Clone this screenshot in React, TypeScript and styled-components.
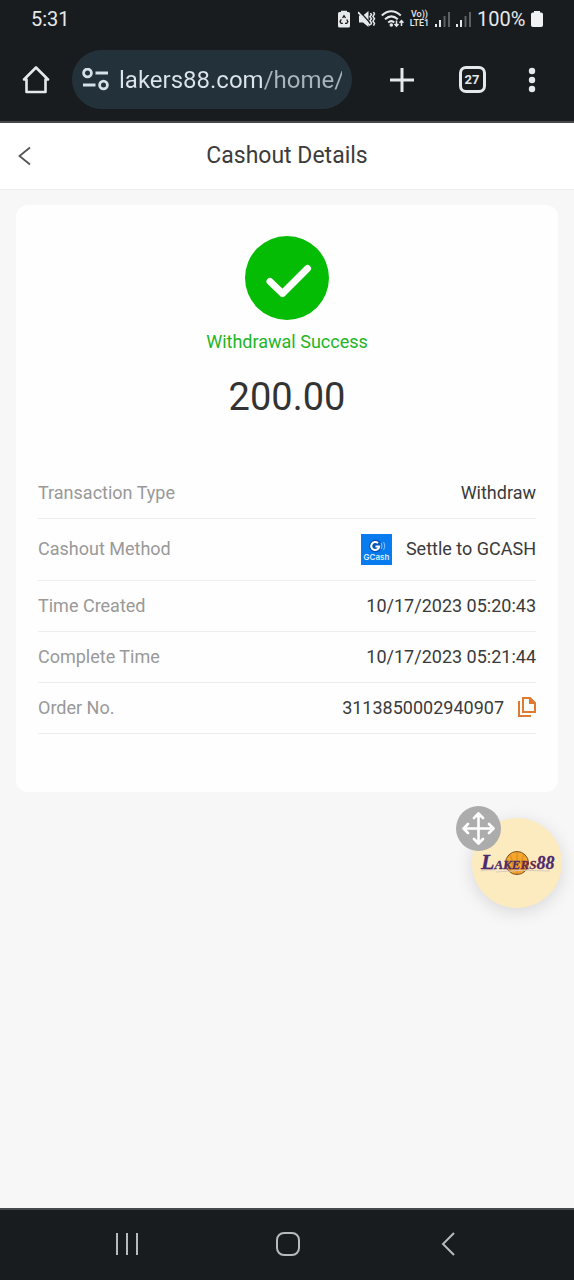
import React from "react";
import styled, { createGlobalStyle } from "styled-components";

const GlobalStyle = createGlobalStyle`
  *, *::before, *::after { box-sizing: border-box; }
  body { margin: 0; background: #f7f7f7; font-family: Roboto, "Liberation Sans", sans-serif; }
  h1, p, dl, dd { margin: 0; font-weight: 400; }
  button { border: 0; padding: 0; background: none; color: inherit; font: inherit; cursor: pointer; }
  svg { display: block; flex: none; }
`;

const Screen = styled.div`
  display: flex;
  flex-direction: column;
  min-height: 100vh;
`;

const BrowserChrome = styled.header`
  background: #191c1f;
  color: #e6e8ea;
  border-bottom: 2px solid #48494b;
`;

const StatusBar = styled.div`
  display: flex;
  align-items: center;
  justify-content: space-between;
  height: 38px;
  padding: 0 31px;
  font-size: 20px;
`;

const StatusIcons = styled.div`
  display: flex;
  align-items: center;
  gap: 5px;
`;

const NetworkLabel = styled.span`
  display: flex;
  flex-direction: column;
  align-items: center;
  width: 21px;
  font-size: 9px;
  font-weight: 500;
  line-height: 9px;
`;

const Charge = styled.span`
  width: 49px;
  white-space: nowrap;
`;

const Toolbar = styled.div`
  display: flex;
  align-items: center;
  gap: 28px;
  height: 83px;
  padding: 0 30px 0 16px;
`;

const IconButton = styled.button<{ $width?: number }>`
  display: flex;
  flex: none;
  align-items: center;
  justify-content: center;
  width: ${(p) => p.$width ?? 40}px;
  height: 44px;
`;

const AddressGroup = styled.div`
  display: flex;
  flex: 1;
  align-items: center;
  gap: 16px;
  min-width: 0;
`;

const AddressBar = styled.label`
  display: flex;
  flex: 1;
  align-items: center;
  gap: 9px;
  min-width: 0;
  height: 59px;
  padding: 0 10px;
  border-radius: 30px;
  background: #23313a;
`;

const AddressInput = styled.input`
  flex: 1;
  min-width: 0;
  height: 36px;
  padding: 0;
  border: 0;
  outline: 0;
  background: linear-gradient(90deg, #dce5eb 144px, #a9b5bd 144px);
  background-clip: text;
  color: transparent;
  font: 400 24px Roboto, sans-serif;
`;

const TabCount = styled.span`
  display: flex;
  align-items: center;
  justify-content: center;
  width: 27px;
  height: 27px;
  border: 3px solid #e6e8ea;
  border-radius: 7px;
  font-size: 13px;
  font-weight: 700;
`;

const PageHeader = styled.div`
  display: grid;
  grid-template-columns: 48px 1fr 48px;
  align-items: center;
  height: 67px;
  background: #fff;
  border-bottom: 1px solid #eeeeee;
  color: #3c3c3c;
`;

const Title = styled.h1`
  font-size: 23px;
  line-height: 28px;
  text-align: center;
`;

const Main = styled.main`
  position: relative;
  flex: 1;
  padding: 15px 16px;
`;

const Card = styled.section`
  display: flex;
  flex-direction: column;
  align-items: center;
  padding: 31px 22px 58px;
  border-radius: 12px;
  background: #fefefe;
`;

const Status = styled.p`
  margin-top: 10px;
  color: #1fb526;
  font-size: 18px;
  line-height: 24px;
`;

const Amount = styled.p`
  margin-top: 19px;
  color: #333;
  font-size: 38px;
  line-height: 48px;
`;

const Details = styled.dl`
  width: 100%;
  margin-top: 47px;
  font-size: 18px;
`;

const Row = styled.div`
  display: flex;
  align-items: center;
  justify-content: space-between;
  min-height: 51px;
  padding-bottom: 2px;
  border-bottom: 1px solid #eeeeee;
`;

const Label = styled.dt`
  color: #999;
`;

const Value = styled.dd`
  display: flex;
  align-items: center;
  gap: 14px;
  color: #3a3a3a;
`;

const MethodLogo = styled.span`
  display: block;
  padding: 15px 0 13px;
`;

const CopyButton = styled.button`
  display: block;
`;

const FloatingBadge = styled.div`
  position: absolute;
  right: 12px;
  bottom: 300px;
  width: 90px;
  height: 90px;
`;

const BrandButton = styled.button`
  width: 90px;
  height: 90px;
  border-radius: 50%;
  background: #fdebc0;
  box-shadow: 0 4px 18px rgba(0, 0, 0, 0.13);
`;

const DragHandle = styled.button`
  position: absolute;
  top: -12px;
  left: -16px;
  display: flex;
  align-items: center;
  justify-content: center;
  width: 45px;
  height: 45px;
  border-radius: 50%;
  background: #acacac;
`;

const NavBar = styled.nav`
  display: flex;
  align-items: center;
  justify-content: space-between;
  height: 72px;
  padding: 0 104px 2px 105px;
  border-top: 2px solid #48494b;
  background: #191c1f;
`;

const SignalIcon = () => (
  <svg width="16" height="18" viewBox="0 0 16 18" aria-hidden="true">
    <path d="M0 14h2v3H0z M4 10h2v7H4z" fill="#e6e8ea" />
    <path d="M8.500 6h2v11h-2z M13 2h2v15h-2z" fill="#5d6164" />
  </svg>
);

const SaverIcon = () => (
  <svg width="16" height="18" viewBox="0 0 16 18" aria-hidden="true">
    <path d="M4 2V.8h6V2h1.500Q13 2 13 3.500V16q0 1.500-1.500 1.500h-9Q1 17.500 1 16V3.500Q1 2 2.500 2z" fill="#e6e8ea" />
    <path d="M5.600 8 7 5.800 8.500 8M9.700 9.500l1.200 2.200-1.200 1.600H8M5.800 13.300H4.200L3 11.700l1.300-2.300" fill="none" stroke="#191c1f" strokeWidth="1.300" />
  </svg>
);

const MuteIcon = () => (
  <svg width="18" height="18" viewBox="0 0 18 18" aria-hidden="true">
    <path d="M1 5.500h4L10.500 1v16L5 12.500H1z" fill="#e6e8ea" />
    <path d="M1 .500 13 14" stroke="#191c1f" strokeWidth="1.200" />
    <path d="M0 2 12 15.500" stroke="#e6e8ea" strokeWidth="1.800" />
    <path d="m12.500 3 1 1.800-1.500 2 1.500 2-1.500 2 1.500 2-1 2.200M15.500 2l1 2-1.500 2.400 1.500 2.400-1.500 2.400 1.500 2.400-1 2" fill="none" stroke="#e6e8ea" strokeWidth="1.500" />
  </svg>
);

const WifiIcon = () => (
  <svg width="23" height="20" viewBox="0 0 23 20" aria-hidden="true">
    <g fill="none" stroke="#e6e8ea" strokeWidth="2">
      <path d="M.800 6.500q9.500-8.400 19 0M4 10.200q6.400-5.600 12.800 0M7.200 13.500q3.200-2.800 6 0" />
      <path d="M15.500 11.500V17m-2-2 2 2.200 2-2.200M20.500 17v-5.500m-2 2.200 2-2.200 2 2.200" strokeWidth="1.500" />
    </g>
    <circle cx="10.300" cy="16" r="1.800" fill="#e6e8ea" />
  </svg>
);

const BatteryIcon = () => (
  <svg width="12" height="18" viewBox="0 0 12 18" aria-hidden="true">
    <path d="M3 2.500V1h6v1.500h1.200Q12 2.500 12 4.300v10.900q0 1.800-1.800 1.800H1.800Q0 17 0 15.200V4.300q0-1.800 1.800-1.800z" fill="#f0f1f2" />
  </svg>
);

const SiteInfoIcon = () => (
  <svg width="28" height="24" viewBox="0 0 28 24" aria-hidden="true">
    <g fill="none" stroke="#d5e0e7" strokeWidth="2.800">
      <circle cx="5.500" cy="5" r="3.900" />
      <circle cx="21.500" cy="17" r="3.900" />
      <path d="M13.500 5H26M1 17h12.500" />
    </g>
  </svg>
);

const GcashLogo = () => (
  <svg width="31" height="31" viewBox="0 0 31 31" role="img" aria-label="GCash">
    <path d="M0 0h31v31H0z" fill="#087cee" />
    <circle cx="14.500" cy="12" r="6.500" fill="#0757b8" />
    <path d="M17 9.100a4 4 0 1 0 1.200 3.300H14.500" fill="none" stroke="#fff" strokeWidth="2" />
    <path d="M20 8.800q1.800 3.100 0 6.200M22.500 8q2.400 4 0 8" fill="none" stroke="#75bbff" strokeWidth="1.100" />
    <text x="15.500" y="26" textAnchor="middle" fill="#dceeff" fontFamily="Inter, sans-serif" fontSize="8" fontWeight="600">GCash</text>
  </svg>
);

const BrandLogo = () => (
  <svg width="90" height="90" viewBox="0 0 90 90" role="img" aria-label="Lakers88">
    <circle cx="45" cy="45" r="11.500" fill="#f5a72b" stroke="#7a5030" strokeWidth="1" />
    <path d="M34 45h22M45 34v22M38 37q5 8 0 16M52 37q-5 8 0 16" fill="none" stroke="#c98222" strokeWidth=".800" />
    <path d="M9 53q7-2 14-1M24 54q28-3 54-1" fill="none" stroke="#d9c9bd" strokeWidth="1" />
    <text x="9" y="51" fontFamily="Liberation Serif, serif" fontStyle="italic" fontWeight="700" fill="#4d2a6d" stroke="#4d2a6d" strokeWidth=".300">
      <tspan fontSize="22">L</tspan>
      <tspan fontSize="13">AKE</tspan>
      <tspan fontSize="13" fill="#6b2447" stroke="#6b2447">RS</tspan>
      <tspan fontSize="18">88</tspan>
    </text>
  </svg>
);

const plainRows = [
  { label: "Time Created", value: "10/17/2023 05:20:43" },
  { label: "Complete Time", value: "10/17/2023 05:21:44" },
];

export default function App() {
  return (
    <Screen>
      <GlobalStyle />
      <BrowserChrome>
        <StatusBar>
          <span>5:31</span>
          <StatusIcons>
            <SaverIcon />
            <MuteIcon />
            <WifiIcon />
            <NetworkLabel>
              <span>Vo))</span>
              <span>LTE1</span>
            </NetworkLabel>
            <SignalIcon />
            <SignalIcon />
            <Charge>100%</Charge>
            <BatteryIcon />
          </StatusIcons>
        </StatusBar>
        <Toolbar>
          <AddressGroup>
            <IconButton aria-label="Home">
              <svg width="28" height="28" viewBox="0 0 28 28" fill="none" stroke="#e6e8ea" strokeWidth="2.600" strokeLinejoin="round" strokeLinecap="round">
                <path d="M4.500 13.500H2L14 1.500l12 12h-2.500V26h-19z" />
              </svg>
            </IconButton>
            <AddressBar>
              <SiteInfoIcon />
              <AddressInput aria-label="Address" defaultValue="lakers88.com/home/" />
            </AddressBar>
          </AddressGroup>
          <IconButton $width={44} aria-label="New tab">
            <svg width="24" height="24" viewBox="0 0 24 24" stroke="#e6e8ea" strokeWidth="3">
              <path d="M12 0v24M0 12h24" />
            </svg>
          </IconButton>
          <IconButton aria-label="27 open tabs">
            <TabCount>27</TabCount>
          </IconButton>
          <IconButton $width={24} aria-label="More options">
            <svg width="8" height="26" viewBox="0 0 8 26" fill="#e6e8ea">
              <circle cx="4" cy="4" r="3.200" />
              <circle cx="4" cy="13" r="3.200" />
              <circle cx="4" cy="22" r="3.200" />
            </svg>
          </IconButton>
        </Toolbar>
      </BrowserChrome>

      <PageHeader>
        <IconButton $width={48} aria-label="Back">
          <svg width="14" height="20" viewBox="0 0 14 20" fill="none" stroke="#555" strokeWidth="1.800">
            <path d="M13 1.500 2.500 10 13 18.500" />
          </svg>
        </IconButton>
        <Title>Cashout Details</Title>
      </PageHeader>

      <Main>
        <Card>
          <svg width="84" height="84" viewBox="0 0 84 84" aria-hidden="true">
            <circle cx="42" cy="42" r="42" fill="#05bc05" />
            <path d="M25 45.500 37.500 57.500 62.500 32.500" fill="none" stroke="#fff" strokeWidth="7" strokeLinecap="round" strokeLinejoin="round" />
          </svg>
          <Status>Withdrawal Success</Status>
          <Amount>200.00</Amount>
          <Details>
            <Row>
              <Label>Transaction Type</Label>
              <Value>Withdraw</Value>
            </Row>
            <Row>
              <Label>Cashout Method</Label>
              <Value>
                <MethodLogo>
                  <GcashLogo />
                </MethodLogo>
                Settle to GCASH
              </Value>
            </Row>
            {plainRows.map((row) => (
              <Row key={row.label}>
                <Label>{row.label}</Label>
                <Value>{row.value}</Value>
              </Row>
            ))}
            <Row>
              <Label>Order No.</Label>
              <Value>
                3113850002940907
                <CopyButton aria-label="Copy order number">
                  <svg width="18" height="20" viewBox="0 0 18 20" fill="none" stroke="#df7a32" strokeWidth="2">
                    <path d="M5 1h7l5 5v9H5zM1 4v15h12" />
                    <path d="M11 0v7h7z" fill="#df7a32" stroke="none" />
                  </svg>
                </CopyButton>
              </Value>
            </Row>
          </Details>
        </Card>
        <FloatingBadge>
          <BrandButton>
            <BrandLogo />
          </BrandButton>
          <DragHandle aria-label="Move">
            <svg width="33" height="33" viewBox="0 0 33 33" fill="none" stroke="#fff" strokeWidth="2.600" strokeLinecap="round" strokeLinejoin="round">
              <path d="M16.500 2v29M2 16.500h29M12 6l4.500-4.500L21 6M12 27l4.500 4.500L21 27M6 12l-4.500 4.500L6 21M27 12l4.500 4.500L27 21" />
            </svg>
          </DragHandle>
        </FloatingBadge>
      </Main>

      <NavBar>
        <IconButton $width={44} aria-label="Recent apps">
          <svg width="24" height="24" viewBox="0 0 24 24" stroke="#b6babd" strokeWidth="2">
            <path d="M2 1v22M12 1v22M22 1v22" />
          </svg>
        </IconButton>
        <IconButton $width={44} aria-label="Home screen">
          <svg width="24" height="24" viewBox="0 0 24 24" fill="none" stroke="#b6babd" strokeWidth="2">
            <rect x="1" y="1" width="22" height="22" rx="7" />
          </svg>
        </IconButton>
        <IconButton $width={44} aria-label="Go back">
          <svg width="14" height="24" viewBox="0 0 14 24" fill="none" stroke="#b6babd" strokeWidth="2">
            <path d="M13 1 2 12l11 11" />
          </svg>
        </IconButton>
      </NavBar>
    </Screen>
  );
}
